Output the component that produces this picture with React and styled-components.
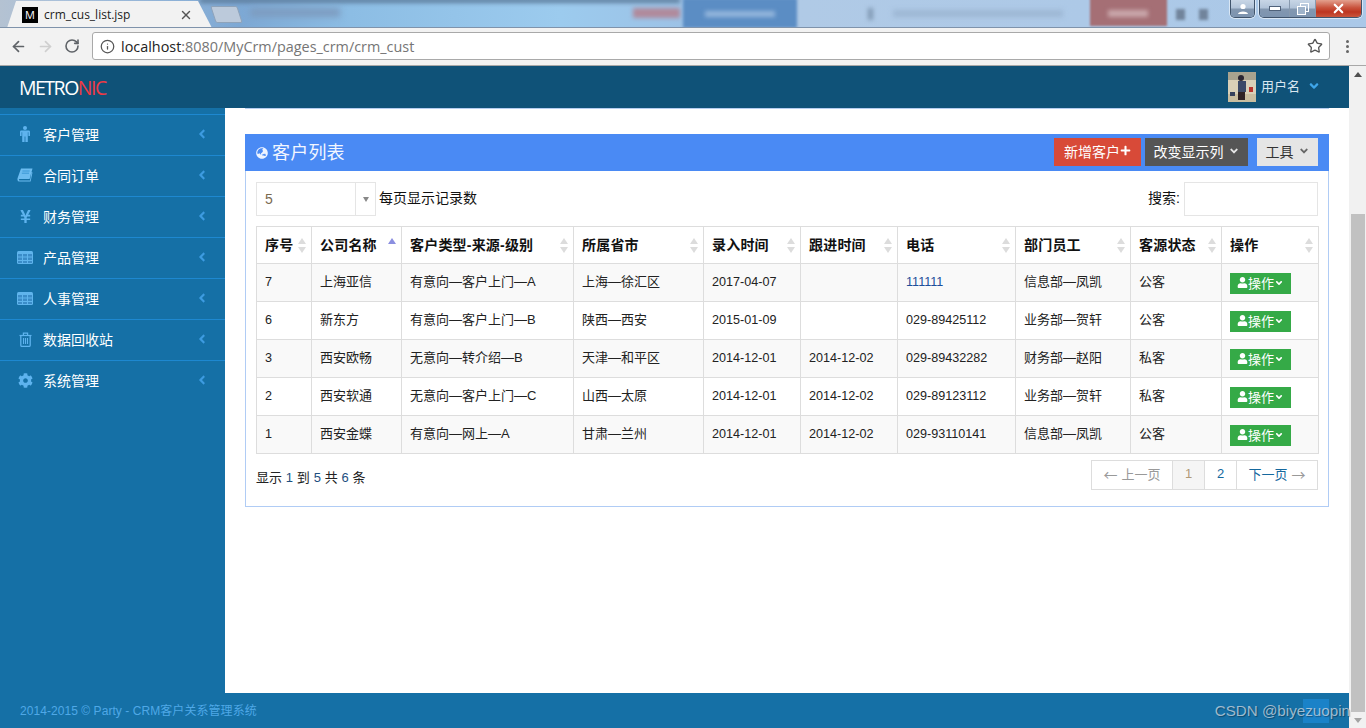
import styled, { createGlobalStyle } from 'styled-components'
import { ArrowLeft, ArrowRight, RotateCw, Info, Star, X } from 'lucide-react'
import { FaYenSign, FaCog, FaAngleLeft, FaAngleDown, FaGlobeAsia, FaPlus, FaUser } from 'react-icons/fa'

const GlobalStyle = createGlobalStyle`
  html, body {
    margin: 0;
    padding: 0;
    overflow: hidden;
  }
  body {
    font-family: "Liberation Sans", "Noto Sans CJK SC", sans-serif;
    font-size: 14px;
    color: #333;
  }
  * {
    box-sizing: border-box;
  }
`

const MaleIcon = () => (
  <svg width='12' height='16' viewBox='0 0 12 16' fill='#5eb3ee'>
    <circle cx='6' cy='2' r='2' />
    <path d='M2.4 4.4 H9.6 Q11 4.4 11 5.8 V10 H9.4 V6.2 H8.8 V16 H6.4 V10.6 H5.6 V16 H3.2 V6.2 H2.6 V10 H1 V5.8 Q1 4.4 2.4 4.4 Z' />
  </svg>
)

const BookIcon = () => (
  <svg width='16' height='14' viewBox='0 0 16 14'>
    <path d='M4 0.5 H15.5 L12.6 11 H2.6 Q1.6 11 2 12 Q2.2 12.6 3 12.6 H13 L14.6 4 L15.5 4.4 L13.6 13.6 H2.6 Q0.4 13.6 0.4 11.4 Q0.4 10.6 0.8 9.6 Z' fill='#6cbcf0' />
    <path d='M5.4 3 H12.6 M4.8 5.2 H12' stroke='#2f8fd0' strokeWidth='0.8' />
  </svg>
)

const TableIcon = () => (
  <svg width='16' height='13' viewBox='0 0 16 13'>
    <rect width='16' height='13' rx='1.5' fill='#5fb4ec' />
    <path d='M1 3 H5 V5.5 H1 Z M6 3 H10 V5.5 H6 Z M11 3 H15 V5.5 H11 Z M1 6.5 H5 V9 H1 Z M6 6.5 H10 V9 H6 Z M11 6.5 H15 V9 H11 Z M1 10 H5 V12 H1 Z M6 10 H10 V12 H6 Z M11 10 H15 V12 H11 Z' fill='#3a8cc8' />
  </svg>
)

const TrashIcon = () => (
  <svg width='13' height='15' viewBox='0 0 13 15' fill='none' stroke='#5eb3ee'>
    <path d='M0.5 3.5 H12.5' strokeWidth='1.2' />
    <path d='M4.4 3.2 V1.2 H8.6 V3.2' strokeWidth='1.2' />
    <path d='M1.8 3.5 V13.2 Q1.8 14.4 3 14.4 H10 Q11.2 14.4 11.2 13.2 V3.5' strokeWidth='1.3' />
    <path d='M4.5 6 V12 M6.5 6 V12 M8.5 6 V12' strokeWidth='1.1' />
  </svg>
)

const sideItems = [
  { name: '客户管理', icon: <MaleIcon /> },
  { name: '合同订单', icon: <BookIcon /> },
  { name: '财务管理', icon: <FaYenSign /> },
  { name: '产品管理', icon: <TableIcon /> },
  { name: '人事管理', icon: <TableIcon /> },
  { name: '数据回收站', icon: <TrashIcon /> },
  { name: '系统管理', icon: <FaCog /> },
]

const columns = ['序号', '公司名称', '客户类型-来源-级别', '所属省市', '录入时间', '跟进时间', '电话', '部门员工', '客源状态', '操作']
const widths = [55, 90, 172, 130, 97, 97, 118, 115, 91, 97]

const rows = [
  ['7', '上海亚信', '有意向—客户上门—A', '上海—徐汇区', '2017-04-07', '', '111111', '信息部—凤凯', '公客'],
  ['6', '新东方', '有意向—客户上门—B', '陕西—西安', '2015-01-09', '', '029-89425112', '业务部—贺轩', '公客'],
  ['3', '西安欧畅', '无意向—转介绍—B', '天津—和平区', '2014-12-01', '2014-12-02', '029-89432282', '财务部—赵阳', '私客'],
  ['2', '西安软通', '无意向—客户上门—C', '山西—太原', '2014-12-01', '2014-12-02', '029-89123112', '业务部—贺轩', '私客'],
  ['1', '西安金蝶', '有意向—网上—A', '甘肃—兰州', '2014-12-01', '2014-12-02', '029-93110141', '信息部—凤凯', '公客'],
]

const Window = styled.div`
  width: 1366px;
  height: 728px;
  display: flex;
  flex-direction: column;
  overflow: hidden;
  position: relative;
`

const TabStrip = styled.div`
  height: 28px;
  flex: none;
  display: flex;
  align-items: flex-end;
  position: relative;
  overflow: hidden;
  background: linear-gradient(90deg, #b4c2d2 0, #a9c0da 60px, #7da8d4 240px, #8cbde4 350px, #9ccbee 560px, #9cc2e6 680px, #b0cae6 800px, #aac8e8 1366px);
  border-bottom: 1px solid #7f93ab;
`

const Blob = styled.div`
  position: absolute;
  top: ${(p) => p.$top}px;
  left: ${(p) => p.$left}px;
  width: ${(p) => p.$width}px;
  height: ${(p) => p.$height}px;
  background: ${(p) => p.$color};
  filter: blur(${(p) => p.$blur}px);
`

const Tab = styled.div`
  position: relative;
  width: 205px;
  height: 27px;
  margin-left: 7px;
  margin-bottom: -1px;
  padding: 0 19px 0 15px;
  display: flex;
  align-items: center;
  background: #f2f2f2;
  clip-path: polygon(0 100%, 9px 0, 191px 0, 100% 100%);
  font-family: "Open Sans", sans-serif;
  font-size: 12px;
  color: #222;
`

const Favicon = styled.span`
  width: 16px;
  height: 16px;
  margin-right: 6px;
  background: #000;
  color: #fff;
  font-size: 11px;
  line-height: 16px;
  text-align: center;
  flex: none;
`

const TabTitle = styled.span`
  flex: 1;
`

const NewTab = styled.div`
  position: relative;
  width: 27px;
  height: 17px;
  margin: 0 0 4px 1px;
  background: #bccadb;
  border: 1px solid #8ea3ba;
  border-radius: 2px;
  transform: skewX(18deg);
`

const WindowButtons = styled.div`
  position: absolute;
  top: 0;
  right: 4px;
  display: flex;
  gap: 4px;
`

const WinGroup = styled.div`
  display: flex;
  height: 18px;
  border: 1px solid #40546c;
  border-top: none;
  border-radius: 0 0 5px 5px;
  overflow: hidden;
  box-shadow: 0 0 0 1px rgba(255, 255, 255, 0.55);
`

const WinButton = styled.div`
  width: ${(p) => p.$width}px;
  display: flex;
  align-items: center;
  justify-content: center;
  background: ${(p) =>
    p.$close
      ? 'linear-gradient(#e3a08e 0, #c9533d 45%, #bd3520 70%, #c9553c 100%)'
      : 'linear-gradient(#c8d6e6 0, #b2c4d9 45%, #8297b0 55%, #7d94b0 100%)'};
  border-left: ${(p) => (p.$first ? 'none' : '1px solid #8799ae')};
`

const Toolbar = styled.div`
  height: 38px;
  flex: none;
  display: flex;
  align-items: center;
  padding: 0 0 1px 10px;
  background: #f2f2f2;
  border-bottom: 1px solid #a8a8a8;
  color: #5f6368;
`

const NavIcons = styled.div`
  width: 82px;
  display: flex;
  gap: 10px;
  align-items: center;
  flex: none;
`

const AddressBar = styled.div`
  width: 1238px;
  height: 28px;
  display: flex;
  align-items: center;
  padding: 0 6px 0 7px;
  background: #fff;
  border: 1px solid #a9a9a9;
  border-radius: 3px;
  font-family: "Open Sans", sans-serif;
  font-size: 14.4px;
  color: #757575;
`

const Host = styled.span`
  margin-left: 6px;
  color: #222;
`

const Url = styled.span`
  flex: 1;
`

const MenuDots = styled.div`
  margin-left: 16px;
  display: flex;
  flex-direction: column;
  gap: 2px;

  > i {
    width: 3px;
    height: 3px;
    background: #666;
    border-radius: 50%;
  }
`

const Viewport = styled.div`
  flex: 1;
  min-height: 0;
  display: flex;
`

const Page = styled.div`
  flex: 1;
  min-width: 0;
  display: flex;
  flex-direction: column;
`

const TopBar = styled.div`
  height: 42px;
  flex: none;
  display: flex;
  align-items: center;
  padding: 0 28px 0 19px;
  background: #0f5278;
`

const Logo = styled.div`
  font-family: "Open Sans", sans-serif;
  font-size: 19.5px;
  font-weight: 400;
  letter-spacing: -1.5px;
  color: #fff;
  flex: 1;

  > span {
    color: #f03a44;
  }
`

const Avatar = styled.svg`
  width: 28px;
  height: 30px;
  display: block;
`

const UserName = styled.span`
  margin-left: 5px;
  padding-bottom: 3px;
  font-size: 13px;
  color: #d8e6ef;
`

const UserCaret = styled.span`
  margin-left: 7px;
  padding-bottom: 3px;
  display: flex;
  font-size: 14px;
  color: #3fa6ea;
`

const Body = styled.div`
  flex: 1;
  min-height: 0;
  display: flex;
`

const Sidebar = styled.div`
  width: 225px;
  flex: none;
  padding-top: 6px;
  background: #1570a6;
`

const SideItem = styled.div`
  height: 41px;
  display: flex;
  align-items: center;
  padding: 0 16px 2px 17px;
  border-top: 1px solid #1e88d0;
  font-size: 14px;
  color: #fff;
`

const SideIcon = styled.span`
  width: 16px;
  margin-right: 10px;
  display: flex;
  justify-content: center;
  font-size: 15px;
  color: #5eb3ee;
`

const SideLabel = styled.span`
  flex: 1;
`

const SideArrow = styled.span`
  display: flex;
  font-size: 14px;
  color: #3d9be0;
`

const Main = styled.div`
  flex: 1;
  min-width: 0;
  padding: 0 20px;
  background: #fff;
`

const PageBar = styled.div`
  height: 26px;
  border-top: 1px solid #b4cdf0;
`

const Panel = styled.div`
  height: 373px;
  border: 1px solid #b0ccf5;
  border-top: none;
`

const PanelHead = styled.div`
  height: 37px;
  margin: 0 -1px;
  padding: 0 11px 1px;
  display: flex;
  align-items: center;
  background: #4a8af4;
  color: #fff;
`

const PanelIcon = styled.span`
  display: flex;
  margin-right: 4px;
  font-size: 12px;
  color: #eef4ff;
  padding-top: 2px;
`

const PanelTitle = styled.span`
  flex: 1;
  padding-bottom: 3px;
  font-size: 18px;
  letter-spacing: 0.2px;
  color: #f2f6ff;
`

const HeadButton = styled.div`
  width: ${(p) => p.$width}px;
  height: 28px;
  margin-left: ${(p) => p.$gap}px;
  padding-bottom: 3px;
  display: flex;
  align-items: center;
  justify-content: center;
  gap: ${(p) => p.$iconGap}px;
  font-size: 14px;
  background: ${(p) => p.$bg};
  color: ${(p) => p.$color};
`

const ButtonIcon = styled.span`
  display: flex;
  font-size: ${(p) => p.$size}px;
  color: ${(p) => p.$color};
`

const PanelBody = styled.div`
  padding: 11px 10px 0;
`

const FilterRow = styled.div`
  height: 34px;
  display: flex;
  align-items: center;
  justify-content: space-between;
`

const FilterGroup = styled.div`
  display: flex;
  align-items: center;
  color: #111;
`

const FilterText = styled.span`
  padding-bottom: 4px;
`

const SelectBox = styled.div`
  width: 120px;
  height: 34px;
  margin-right: 3px;
  display: flex;
  align-items: center;
  border: 1px solid #e5e5e5;
  color: #7a6a4f;
`

const SelectValue = styled.span`
  flex: 1;
  padding-left: 8px;
`

const SelectArrow = styled.span`
  width: 20px;
  height: 32px;
  display: flex;
  align-items: center;
  justify-content: center;
  border-left: 1px solid #e5e5e5;

  &::after {
    content: '';
    border: 3px solid transparent;
    border-top: 5px solid #888;
    border-bottom: none;
  }
`

const SearchInput = styled.div`
  width: 134px;
  height: 34px;
  margin-left: 4px;
  border: 1px solid #e5e5e5;
`

const Table = styled.table`
  width: 1062px;
  margin-top: 10px;
  table-layout: fixed;
  border-collapse: collapse;
`

const Th = styled.th`
  height: 37px;
  padding: 0 5px 2px 8px;
  border: 1px solid #ddd;
  font-size: 14px;
  font-weight: 700;
  letter-spacing: 0.2px;
  text-align: left;
  color: #111;
  white-space: nowrap;
`

const ThInner = styled.div`
  display: flex;
  align-items: center;
  justify-content: space-between;
`

const SortIcon = styled.svg`
  width: 8px;
  height: 15px;
  flex: none;
  margin-top: 2px;
`

const Tr = styled.tr`
  background: ${(p) => (p.$odd ? '#f9f9f9' : '#fff')};
`

const Td = styled.td`
  height: 38px;
  padding: 0 8px ${(p) => (p.$digits ? 1 : 5)}px;
  border: 1px solid #ddd;
  font-size: ${(p) => (p.$digits ? 12.6 : 13)}px;
  color: ${(p) => p.$color || '#222'};
  white-space: nowrap;
  overflow: hidden;
`

const ActionCell = styled.td`
  height: 38px;
  padding: 0 8px;
  border: 1px solid #ddd;
`

const ActionButton = styled.div`
  width: 61px;
  height: 21px;
  margin-top: 1px;
  padding-bottom: 1px;
  display: flex;
  align-items: center;
  justify-content: center;
  font-size: 13px;
  color: #fff;
  background: #35aa47;
`

const TableFoot = styled.div`
  margin-top: 6px;
  display: flex;
  align-items: center;
  justify-content: space-between;
`

const Summary = styled.div`
  padding-top: 2px;
  font-size: 13px;
  color: #222;
  word-spacing: 0.2px;

  > b {
    font-weight: 400;
    color: #1d4f80;
  }
`

const Pager = styled.div`
  display: flex;
  height: 30px;
  border: 1px solid #ddd;
`

const PageLink = styled.div`
  width: ${(p) => p.$width}px;
  padding-bottom: 3px;
  display: flex;
  align-items: center;
  justify-content: center;
  gap: 4px;
  font-size: 13px;
  border-left: ${(p) => (p.$first ? 'none' : '1px solid #ddd')};
  color: ${(p) => p.$color};
  background: ${(p) => (p.$active ? '#f5f5f5' : '#fff')};
`

const PageArrow = styled.span`
  font-family: "Noto Sans CJK SC", sans-serif;
  font-size: 14px;
  color: #999;
`

const Footer = styled.div`
  height: 35px;
  flex: none;
  display: flex;
  align-items: center;
  padding: 0 0 2px 20px;
  background: #1570a6;
  font-size: 12px;
  letter-spacing: 0.06px;
  color: #4fa8e6;
`

const BackTop = styled.div`
  position: absolute;
  right: 37px;
  bottom: 5px;
  width: 26px;
  height: 24px;
  background: #1a82c8;
`

const Watermark = styled.div`
  position: absolute;
  right: 16px;
  bottom: 9px;
  font-size: 15.2px;
  color: rgba(214, 222, 230, 0.72);
  text-shadow: 1px 1px 1px rgba(0, 0, 0, 0.35);
`

const ScrollBar = styled.div`
  width: 17px;
  flex: none;
  display: flex;
  flex-direction: column;
  background: #f1f1f1;
`

const ScrollButton = styled.div`
  height: 17px;
  flex: none;
  display: flex;
  align-items: center;
  justify-content: center;

  &::after {
    content: '';
    border: 4px solid transparent;
    ${(p) =>
      p.$down
        ? 'border-top: 5px solid #a3a3a3; border-bottom: none;'
        : 'border-bottom: 5px solid #505050; border-top: none;'}
  }
`

const ScrollTrack = styled.div`
  flex: 1;
  padding: 131px 1px 0 2px;
`

const ScrollThumb = styled.div`
  height: 498px;
  background: #c1c1c1;
`

const SortArrows = ({ active }) => (
  <SortIcon viewBox='0 0 8 15'>
    <path d='M4 0 L8 6 L0 6 Z' fill={active ? '#8b8fe0' : '#dcdcdc'} />
    {!active && <path d='M4 15 L8 9 L0 9 Z' fill='#dcdcdc' />}
  </SortIcon>
)

const App = () => {
  return (
    <Window>
      <GlobalStyle />
      <TabStrip>
        <Blob $left={200} $top={-2} $width={480} $height={5} $color='#5f7f9f' $blur={2} />
        <Blob $left={250} $top={8} $width={90} $height={9} $color='#7d9cc0' $blur={3} />
        <Blob $left={633} $top={8} $width={47} $height={10} $color='#b08a9c' $blur={2} />
        <Blob $left={683} $top={-2} $width={114} $height={30} $color='#5b8dc4' $blur={1.5} />
        <Blob $left={705} $top={11} $width={70} $height={6} $color='#94b6dc' $blur={2} />
        <Blob $left={868} $top={8} $width={5} $height={12} $color='#8199b4' $blur={2} />
        <Blob $left={893} $top={10} $width={170} $height={7} $color='#9db7d4' $blur={2.5} />
        <Blob $left={1090} $top={-2} $width={77} $height={28} $color='#a56f75' $blur={1} />
        <Blob $left={1108} $top={10} $width={40} $height={7} $color='#c9a7ab' $blur={2} />
        <Blob $left={1176} $top={9} $width={9} $height={11} $color='#71849b' $blur={1.5} />
        <Blob $left={1199} $top={9} $width={9} $height={11} $color='#71849b' $blur={1.5} />
        <Tab>
          <Favicon>M</Favicon>
          <TabTitle>crm_cus_list.jsp</TabTitle>
          <X size={14} strokeWidth={2.4} color='#555' />
        </Tab>
        <NewTab />
        <WindowButtons>
          <WinGroup>
            <WinButton $width={23} $first>
              <svg width='12' height='12' viewBox='0 0 12 12'>
                <circle cx='6' cy='3.5' r='2.6' fill='#fff' />
                <path d='M1 11 C1 7.5 11 7.5 11 11 Z' fill='#fff' />
              </svg>
            </WinButton>
          </WinGroup>
          <WinGroup>
            <WinButton $width={29} $first>
              <svg width='12' height='6' viewBox='0 0 12 6'>
                <rect x='0.5' y='0.5' width='11' height='4' fill='#fff' stroke='#50627a' />
              </svg>
            </WinButton>
            <WinButton $width={26}>
              <svg width='12' height='12' viewBox='0 0 12 12'>
                <rect x='3.5' y='0.5' width='8' height='8' fill='none' stroke='#fff' />
                <rect x='0.5' y='3.5' width='8' height='8' fill='#9fb3ca' stroke='#fff' />
              </svg>
            </WinButton>
            <WinButton $width={46} $close>
              <X size={15} strokeWidth={3.5} color='#fff' />
            </WinButton>
          </WinGroup>
        </WindowButtons>
      </TabStrip>
      <Toolbar>
        <NavIcons>
          <ArrowLeft size={17} strokeWidth={2.4} color='#5f6368' />
          <ArrowRight size={17} strokeWidth={2.4} color='#cfcfcf' />
          <RotateCw size={16} strokeWidth={2.4} color='#5f6368' />
        </NavIcons>
        <AddressBar>
          <Info size={15} strokeWidth={2} color='#555' />
          <Host>localhost</Host>
          <Url>:8080/MyCrm/pages_crm/crm_cust</Url>
          <Star size={16} strokeWidth={2} color='#555' />
        </AddressBar>
        <MenuDots>
          <i />
          <i />
          <i />
        </MenuDots>
      </Toolbar>
      <Viewport>
        <Page>
          <TopBar>
            <Logo>
              METRO<span>NIC</span>
            </Logo>
            <Avatar viewBox='0 0 28 30'>
              <defs>
                <filter id='soft'>
                  <feGaussianBlur stdDeviation='0.7' />
                </filter>
              </defs>
              <g filter='url(#soft)'>
                <rect width='28' height='30' fill='#d9d0b8' />
                <rect width='28' height='8' fill='#a9a38f' />
                <rect y='22' width='28' height='8' fill='#c9bda0' />
                <circle cx='13' cy='6' r='3' fill='#2a2530' />
                <rect x='10' y='9' width='8' height='11' fill='#3a4a68' />
                <rect x='10' y='20' width='7' height='8' fill='#2e2028' />
                <rect x='21' y='15' width='4' height='5' fill='#b8352e' />
                <rect x='2' y='20' width='5' height='4' fill='#35405c' />
              </g>
            </Avatar>
            <UserName>用户名</UserName>
            <UserCaret>
              <FaAngleDown />
            </UserCaret>
          </TopBar>
          <Body>
            <Sidebar>
              {sideItems.map((item) => (
                <SideItem key={item.name}>
                  <SideIcon>{item.icon}</SideIcon>
                  <SideLabel>{item.name}</SideLabel>
                  <SideArrow>
                    <FaAngleLeft />
                  </SideArrow>
                </SideItem>
              ))}
            </Sidebar>
            <Main>
              <PageBar />
              <Panel>
                <PanelHead>
                  <PanelIcon>
                    <FaGlobeAsia />
                  </PanelIcon>
                  <PanelTitle>客户列表</PanelTitle>
                  <HeadButton $width={87} $gap={0} $iconGap={0} $bg='#d84a38' $color='#fff'>
                    新增客户
                    <ButtonIcon $size={11} $color='#fff'>
                      <FaPlus />
                    </ButtonIcon>
                  </HeadButton>
                  <HeadButton $width={103} $gap={4} $iconGap={4} $bg='#555' $color='#fff'>
                    改变显示列
                    <ButtonIcon $size={12} $color='#e6e6e6'>
                      <FaAngleDown />
                    </ButtonIcon>
                  </HeadButton>
                  <HeadButton $width={61} $gap={9} $iconGap={4} $bg='#e5e5e5' $color='#333'>
                    工具
                    <ButtonIcon $size={12} $color='#666'>
                      <FaAngleDown />
                    </ButtonIcon>
                  </HeadButton>
                </PanelHead>
                <PanelBody>
                  <FilterRow>
                    <FilterGroup>
                      <SelectBox>
                        <SelectValue>5</SelectValue>
                        <SelectArrow />
                      </SelectBox>
                      <FilterText>每页显示记录数</FilterText>
                    </FilterGroup>
                    <FilterGroup>
                      <FilterText>搜索:</FilterText>
                      <SearchInput />
                    </FilterGroup>
                  </FilterRow>
                  <Table>
                    <colgroup>
                      {widths.map((w, i) => (
                        <col key={i} width={w} />
                      ))}
                    </colgroup>
                    <thead>
                      <tr>
                        {columns.map((col, i) => (
                          <Th key={col}>
                            <ThInner>
                              {col}
                              <SortArrows active={i === 1} />
                            </ThInner>
                          </Th>
                        ))}
                      </tr>
                    </thead>
                    <tbody>
                      {rows.map((row, r) => (
                        <Tr key={row[0]} $odd={r % 2 === 0}>
                          {row.map((cell, c) => (
                            <Td
                              key={c}
                              $digits={c === 0 || (c >= 4 && c <= 6)}
                              $color={c === 6 && r === 0 ? '#1d4f9a' : undefined}
                            >
                              {cell}
                            </Td>
                          ))}
                          <ActionCell>
                            <ActionButton>
                              <ButtonIcon $size={11} $color='#fff'>
                                <FaUser />
                              </ButtonIcon>
                              操作
                              <ButtonIcon $size={10} $color='#fff'>
                                <FaAngleDown />
                              </ButtonIcon>
                            </ActionButton>
                          </ActionCell>
                        </Tr>
                      ))}
                    </tbody>
                  </Table>
                  <TableFoot>
                    <Summary>
                      显示 <b>1</b> 到 <b>5</b> 共 <b>6</b> 条
                    </Summary>
                    <Pager>
                      <PageLink $first $width={80} $color='#999'>
                        <PageArrow>←</PageArrow>
                        上一页
                      </PageLink>
                      <PageLink $width={32} $active $color='#b09a78'>
                        1
                      </PageLink>
                      <PageLink $width={32} $color='#15689e'>
                        2
                      </PageLink>
                      <PageLink $width={81} $color='#15689e'>
                        下一页
                        <PageArrow>→</PageArrow>
                      </PageLink>
                    </Pager>
                  </TableFoot>
                </PanelBody>
              </Panel>
            </Main>
          </Body>
          <Footer>2014-2015 © Party - CRM客户关系管理系统</Footer>
        </Page>
        <ScrollBar>
          <ScrollButton />
          <ScrollTrack>
            <ScrollThumb />
          </ScrollTrack>
          <ScrollButton $down />
        </ScrollBar>
      </Viewport>
      <BackTop />
      <Watermark>CSDN @biyezuopin</Watermark>
    </Window>
  )
}

export default App
